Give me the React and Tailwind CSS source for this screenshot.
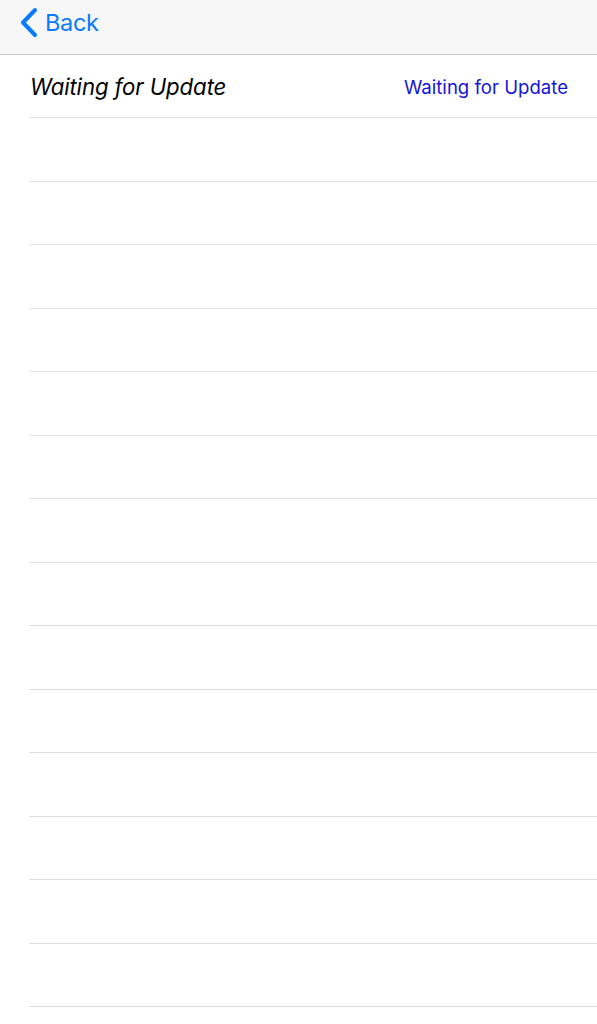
import React from "react";

export default function App() {
  const rows = Array.from({ length: 14 });
  return (
    <div className="w-[597px] h-[1024px] bg-white overflow-hidden" style={{ fontFamily: "Inter, 'Noto Sans', sans-serif" }}>
      <div className="h-[55px] bg-[#f7f7f7] border-b border-[#c8c8cc] flex items-start pt-[7px]">
        <div className="flex items-center pl-[19px] text-[#0a7aff]">
          <svg width="20" height="31" viewBox="0 0 20 31">
            <path d="M16 3 L4 15.5 L16 28" fill="none" stroke="#0a7aff" strokeWidth="4" strokeLinecap="round" strokeLinejoin="round" />
          </svg>
          <span className="ml-[6px] text-[23.5px] leading-none tracking-[-0.3px]">Back</span>
        </div>
      </div>
      <div className="pl-[29px]">
        <div className="h-[63px] border-b border-[#e0e0e2] flex items-center justify-between pr-[29px]">
          <span className="italic text-[22.2px] text-black pl-[1px] tracking-[-0.1px] mt-[1px]">Waiting for Update</span>
          <span className="text-[18.6px] text-[#1515d6] mt-[3px]">Waiting for Update</span>
        </div>
        {rows.map((_, i) => (
          <div key={i} className="h-[63.5px] border-b border-[#e0e0e2]" />
        ))}
      </div>
    </div>
  );
}
